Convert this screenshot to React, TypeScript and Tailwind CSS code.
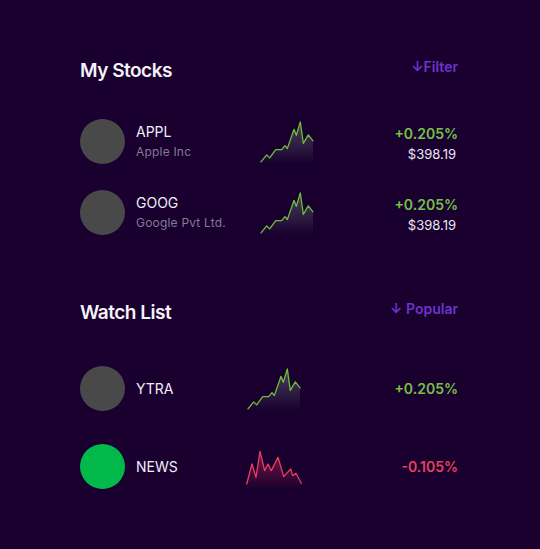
type Pt = [number, number];

const upTrend: Pt[] = [
  [2, 42.9], [7.7, 35.9], [10.7, 38.9], [16.7, 30.6], [22.7, 30.6], [26, 26.6], [28.3, 29.6],
  [35, 10.3], [37.3, 16.3], [41.3, 2.9], [44.3, 24.3], [49.3, 15.9], [54, 21.9],
];

const downTrend: Pt[] = [
  [0.7, 40], [6, 20], [10, 33.3], [14, 7.3], [18.7, 26.6], [22, 20], [25.3, 26.6],
  [32, 13.3], [37.7, 32.6], [44.7, 25], [46.7, 31.6], [50, 29.3], [55.3, 39.3],
];

function Sparkline({ points, stroke, fill, id }: { points: Pt[]; stroke: string; fill: string; id: string }) {
  const line = points.map(([x, y]) => `${x},${y}`).join(" ");
  const area = `${points[0][0]},45 ${line} ${points[points.length - 1][0]},45`;
  return (
    <svg className="shrink-0" width="56" height="45" viewBox="0 0 56 45">
      <defs>
        <linearGradient id={id} x1="0" x2="0" y1="0" y2="1">
          <stop offset="0%" stopColor={fill} stopOpacity="0.7" />
          <stop offset="100%" stopColor={fill} stopOpacity="0" />
        </linearGradient>
      </defs>
      <polygon points={area} fill={`url(#${id})`} />
      <polyline points={line} fill="none" stroke={stroke} strokeWidth="1.3" strokeLinejoin="round" strokeLinecap="round" />
    </svg>
  );
}

function SectionHeader({ title, action }: { title: string; action: string }) {
  return (
    <div className="flex items-start justify-between">
      <h2 className="mt-[2px] text-[19px] leading-[24px] font-semibold tracking-[-0.5px] text-[#f5f2f8]">{title}</h2>
      <button className="text-[14px] leading-[20px] font-semibold text-[#6d33c8]">{action}</button>
    </div>
  );
}

const stocks = [
  { ticker: "APPL", name: "Apple Inc", change: "+0.205%", price: "$398.19" },
  { ticker: "GOOG", name: "Google Pvt Ltd.", change: "+0.205%", price: "$398.19" },
];

export default function App() {
  return (
    <div className="h-[549px] w-full bg-[#19002f] font-['Inter','Noto_Sans',sans-serif]">
      <div className="pl-[80px] pr-[82px] pt-[57px]">
        <SectionHeader title="My Stocks" action="↓Filter" />

        <div className="mt-[36px] flex flex-col gap-[26px]">
          {stocks.map((s, i) => (
            <div className="flex h-[45px] items-start" key={s.ticker}>
              <div className="h-[45px] w-[45px] shrink-0 rounded-full bg-[#494949]" />
              <div className="ml-[11px] mt-[4px] flex w-[123px] flex-col">
                <span className="text-[14px] leading-[18px] text-[#f2eef7]">{s.ticker}</span>
                <span className="mt-[3px] text-[12px] leading-[16px] tracking-[0.2px] text-[#837a93]">{s.name}</span>
              </div>
              <Sparkline points={upTrend} stroke="#6cbd38" fill="#5e5c6c" id={`up-${i}`} />
              <div className="ml-auto mt-[6px] flex flex-col items-end">
                <span className="text-[14px] leading-[18px] font-semibold text-[#76c043]">{s.change}</span>
                <span className="mt-[3px] pr-[2px] text-[13px] leading-[16px] text-[#ebe4f2]">{s.price}</span>
              </div>
            </div>
          ))}
        </div>

        <div className="mt-[64px]">
          <SectionHeader title="Watch List" action="↓ Popular" />
        </div>

        <div className="mt-[41px] flex flex-col gap-[33px]">
          <div className="flex h-[45px] items-center">
            <div className="h-[45px] w-[45px] shrink-0 rounded-full bg-[#494949]" />
            <span className="ml-[11px] w-[110px] text-[14px] leading-[18px] text-[#f2eef7]">YTRA</span>
            <Sparkline points={upTrend} stroke="#6cbd38" fill="#5e5c6c" id="up-w" />
            <span className="ml-auto text-[14px] leading-[18px] font-semibold text-[#76c043]">+0.205%</span>
          </div>
          <div className="flex h-[45px] items-center">
            <div className="h-[45px] w-[45px] shrink-0 rounded-full bg-[#00b94a]" />
            <span className="ml-[11px] w-[110px] text-[14px] leading-[18px] text-[#f2eef7]">NEWS</span>
            <Sparkline points={downTrend} stroke="#e2405c" fill="#a8204c" id="down-w" />
            <span className="ml-auto text-[14px] leading-[18px] font-semibold text-[#e5435c]">-0.105%</span>
          </div>
        </div>
      </div>
    </div>
  );
}
